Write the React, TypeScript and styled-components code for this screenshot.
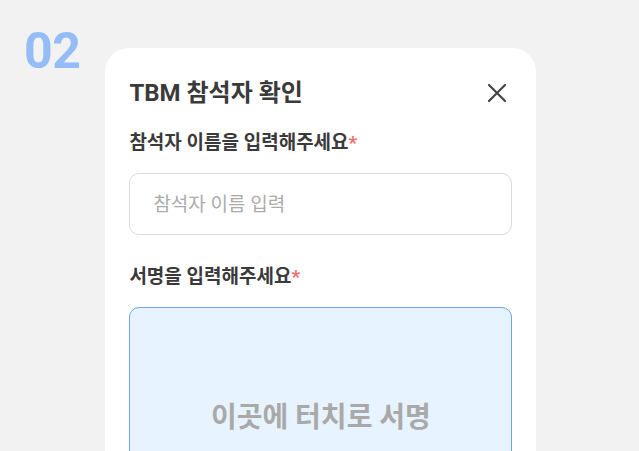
import styled, { createGlobalStyle } from "styled-components";

const GlobalStyle = createGlobalStyle`
  html, body {
    margin: 0;
    padding: 0;
    background: #f2f2f2;
  }
  body {
    font-family: "Roboto", "Noto Sans CJK KR", sans-serif;
    overflow: hidden;
  }
`;

const Page = styled.div`
  display: flex;
  align-items: flex-start;
  gap: 25px;
  padding: 24px 0 0 24px;
  height: 451px;
  box-sizing: border-box;
  overflow: hidden;
`;

const StepNumber = styled.div`
  font-size: 50px;
  font-weight: 700;
  line-height: 54px;
  color: #94bdf7;
  letter-spacing: -0.5px;
`;

const Card = styled.div`
  margin-top: 24px;
  width: 431px;
  height: 500px;
  background: #fff;
  border-radius: 24px;
  padding: 28px 24px 0;
  box-sizing: border-box;
  display: flex;
  flex-direction: column;
`;

const Header = styled.div`
  display: flex;
  align-items: center;
  justify-content: space-between;
`;

const Title = styled.h2`
  margin: 0;
  font-size: 24px;
  font-weight: 700;
  color: #3a3a3a;
  line-height: 34px;
`;

const CloseButton = styled.button`
  border: 0;
  background: none;
  padding: 0;
  width: 24px;
  height: 24px;
  margin-right: 3px;
  display: flex;
  align-items: center;
  justify-content: center;
  cursor: pointer;
`;

const Field = styled.div<{ gap?: number; inner?: number }>`
  display: flex;
  flex-direction: column;
  gap: ${props => props.inner ?? 16}px;
  margin-top: ${props => props.gap ?? 0}px;
`;

const Label = styled.label`
  font-size: 19px;
  font-weight: 700;
  color: #3a3a3a;
  line-height: 24px;
  > span {
    color: #f46b6b;
  }
`;

const Input = styled.input`
  width: 100%;
  height: 62px;
  box-sizing: border-box;
  border: 1px solid #dcdcdc;
  border-radius: 10px;
  padding: 0 23px;
  font-family: "Roboto", "Noto Sans CJK KR", sans-serif;
  font-size: 19px;
  color: #333;
  outline: none;
  &::placeholder {
    color: #ababab;
  }
`;

const SignPad = styled.div`
  height: 216px;
  box-sizing: border-box;
  border: 1.5px solid #6aa6f8;
  border-radius: 10px;
  background: #e7f3ff;
  display: flex;
  align-items: center;
  justify-content: center;
  font-size: 28px;
  font-weight: 700;
  color: #a9a9a9;
`;

export default function App() {
  return (
    <>
      <GlobalStyle />
      <Page>
        <StepNumber>02</StepNumber>
        <Card>
          <Header>
            <Title>TBM 참석자 확인</Title>
            <CloseButton aria-label="닫기">
              <svg width="20" height="20" viewBox="0 0 20 20">
                <path
                  d="M2 2 L18 18 M18 2 L2 18"
                  stroke="#444"
                  strokeWidth="2.2"
                  strokeLinecap="round"
                />
              </svg>
            </CloseButton>
          </Header>
          <Field gap={21} inner={18}>
            <Label>
              참석자 이름을 입력해주세요<span>*</span>
            </Label>
            <Input placeholder="참석자 이름 입력" />
          </Field>
          <Field gap={30} inner={18}>
            <Label>
              서명을 입력해주세요<span>*</span>
            </Label>
            <SignPad>이곳에 터치로 서명</SignPad>
          </Field>
        </Card>
      </Page>
    </>
  );
}
